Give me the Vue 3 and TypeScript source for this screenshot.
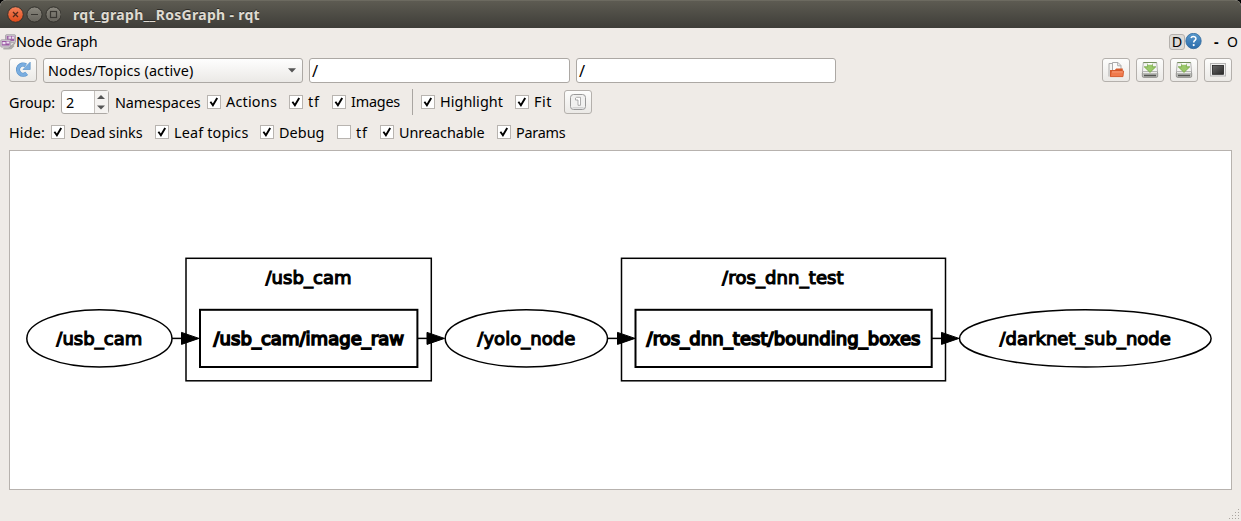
<script setup lang="ts">
import { ref } from 'vue'

interface Check { label: string; on: boolean; pitch: number; text: number }
interface Shape { x: number; w: number; label: string; textX: number; textW: number }

// Spreads a label's letters so that it fills the given width.
const vFit = {
  mounted(el: HTMLElement, binding: { value: number }) {
    const count = (el.textContent ?? '').length
    const natural = el.getBoundingClientRect().width
    el.style.letterSpacing = `${(binding.value - natural) / count}px`
  },
}

const group = ref(2)
const groupChecks = ref<Check[]>([
  { label: 'Actions', on: true, pitch: 82, text: 51 },
  { label: 'tf', on: true, pitch: 43, text: 12 },
  { label: 'Images', on: true, pitch: 80, text: 49 },
])
const viewChecks = ref<Check[]>([
  { label: 'Highlight', on: true, pitch: 94, text: 63 },
  { label: 'Fit', on: true, pitch: 49, text: 18 },
])
const hideChecks = ref<Check[]>([
  { label: 'Dead sinks', on: true, pitch: 104, text: 72.5 },
  { label: 'Leaf topics', on: true, pitch: 105, text: 74.5 },
  { label: 'Debug', on: true, pitch: 77, text: 45.5 },
  { label: 'tf', on: false, pitch: 43, text: 12 },
  { label: 'Unreachable', on: true, pitch: 117, text: 85.5 },
  { label: 'Params', on: true, pitch: 80, text: 49.5 },
])

const nodes: Shape[] = [
  { x: 16.8, w: 145.2, label: '/usb_cam', textX: 46.3, textW: 86 },
  { x: 435.2, w: 162.3, label: '/yolo_node', textX: 467.3, textW: 98 },
  { x: 949.5, w: 251.6, label: '/darknet_sub_node', textX: 989.4, textW: 171.5 },
]
const clusters: Shape[] = [
  { x: 176, w: 245.3, label: '/usb_cam', textX: 255.5, textW: 86 },
  { x: 611.5, w: 324, label: '/ros_dnn_test', textX: 712.1, textW: 121.5 },
]
const topics: Shape[] = [
  { x: 190, w: 217.4, label: '/usb_cam/image_raw', textX: 203.5, textW: 190.5 },
  { x: 625.5, w: 296.2, label: '/ros_dnn_test/bounding_boxes', textX: 636.5, textW: 274 },
]
const edges = [
  { from: 162, to: 189.5 },
  { from: 408, to: 435 },
  { from: 598, to: 625.5 },
  { from: 922, to: 949.5 },
]
</script>

<template>
  <div class="window">
    <header class="titlebar">
      <svg class="controls" width="54" height="18" viewBox="0 0 54 18">
        <defs>
          <linearGradient id="closeFill" x2="0" y2="1"><stop stop-color="#f5835c" /><stop offset="1" stop-color="#df4a19" /></linearGradient>
          <linearGradient id="grayFill" x2="0" y2="1"><stop stop-color="#8b887f" /><stop offset="1" stop-color="#65635b" /></linearGradient>
        </defs>
        <circle cx="8.5" cy="8.5" r="7.8" fill="url(#closeFill)" stroke="#34322d" />
        <circle cx="27.5" cy="8.5" r="7.6" fill="url(#grayFill)" stroke="#34322d" />
        <circle cx="46.5" cy="8.5" r="7.6" fill="url(#grayFill)" stroke="#34322d" />
        <path d="M6 6l5 5M11 6l-5 5" stroke="#52291b" stroke-width="1.3" />
        <path d="M24 8.5h7" stroke="#393732" stroke-width="1.2" />
        <rect x="43.5" y="5.5" width="6" height="6" fill="none" stroke="#393732" stroke-width="1.2" />
      </svg>
      <span v-fit="187" class="title">rqt_graph__RosGraph - rqt</span>
    </header>

    <div class="dock">
      <svg class="dockicon" width="16" height="16" viewBox="0 0 16 16">
        <path d="M4 14.5h7l3-3M9 14l6-5" stroke="#aaa8a5" stroke-width="1.6" fill="none" />
        <rect x="5.5" y=".7" width="10" height="8" rx="1" fill="#c9c3ca" stroke="#9a929c" stroke-width=".7" />
        <rect x="6.8" y="2" width="7.5" height="5" fill="#a064a8" />
        <path d="M8.5 2.5H11v2.3H8.5zM11.8 2.5H14v2.3h-2.2z" fill="#eadced" />
        <rect x=".7" y="5.8" width="10" height="7.3" rx="1" fill="#d2ccd3" stroke="#9a929c" stroke-width=".7" />
        <rect x="1.8" y="7" width="7.8" height="4.5" fill="#9a56a3" />
        <path d="M2.5 8h3v2.2h-3zM6.4 7.6h2.8v2H6.4z" fill="#ecdff0" />
        <path d="M3 14.8h6.5" stroke="#aaa" />
      </svg>
      <span v-fit="81.5" class="label">Node Graph</span>
      <div class="dockbuttons">
        <span class="dbutton">D</span>
        <svg class="help" width="17" height="17" viewBox="0 0 17 17">
          <defs><linearGradient id="helpFill" x2="0" y2="1"><stop stop-color="#5999cd" /><stop offset="1" stop-color="#2b6cab" /></linearGradient></defs>
          <circle cx="8.5" cy="8" r="7.7" fill="url(#helpFill)" stroke="#346b9d" stroke-width=".8" />
          <path d="M6 5.1C6.5 3.7 8 3.3 9.4 3.7c1.7.5 2 2.3.8 3.4-.9.8-1.5 1.1-1.5 2.4" fill="none" stroke="#fff" stroke-width="1.5" />
          <circle cx="8.7" cy="12.1" r="1.1" fill="#fff" />
        </svg>
        <b class="dash">-</b>
        <span class="undock">O</span>
      </div>
    </div>

    <div class="row toolbar">
      <button class="tool refresh">
        <svg width="18" height="18" viewBox="0 0 18 18">
          <path d="M12.6 12.4A5.1 5.1 0 1 1 11.8 4.3" fill="none" stroke="#5b93c8" stroke-width="4.2" />
          <path d="M16.2 1.2v7.3H9z" fill="#79ade0" stroke="#5b93c8" stroke-width=".7" />
          <path d="M12.6 12.4A5.1 5.1 0 1 1 11.8 4.3" fill="none" stroke="#79ade0" stroke-width="3" />
        </svg>
      </button>
      <div class="combo">
        <span v-fit="145.5">Nodes/Topics (active)</span>
        <svg width="8" height="5" viewBox="0 0 8 5"><path d="M0 .3h8L4 4.6z" fill="#555" /></svg>
      </div>
      <div class="field"><span>/</span></div>
      <div class="field second"><span>/</span></div>
      <div class="actions">
        <button class="tool">
          <svg width="18" height="18" viewBox="0 0 18 18">
            <path d="M2 15.5V2.5h4l1.5 1.5V12" fill="#f5f5f3" stroke="#aaa" />
            <path d="M5.5 9V1.5H11l3 3V9" fill="#fafaf9" stroke="#aaa" />
            <path d="M10.7 1.5v3.3H14" fill="none" stroke="#aaa" />
            <path d="M3 15.6V9h4.8l1.4-1.6h6.6v8.2z" fill="#d65a2b" />
            <path d="M3.4 15.6l.8-5.6h12.4l-.6 5.6z" fill="#f07a4c" stroke="#cf5426" stroke-width=".8" />
            <path d="M5 10.9h10.8" stroke="#fba27d" />
          </svg>
        </button>
        <button v-for="n in 2" :key="n" class="tool">
          <svg width="18" height="18" viewBox="0 0 18 18">
            <path d="M2.3 1.5h13.4l.9 9.5H1.4z" fill="#f4f4f2" stroke="#aaa" stroke-width=".9" />
            <path d="M2.4 1.6h13.2" stroke="#6f8a55" stroke-width="1" />
            <rect x="1.3" y="11" width="15.4" height="5.4" rx="1.3" fill="#b9bab6" stroke="#858583" stroke-width=".8" />
            <path d="M2 11.5h14" stroke="#ecece9" />
            <path d="M3 14.5h12" stroke="#555653" stroke-width="1.4" />
            <path d="M6.6 3.2h4.8v2.6h3.4L9 11.4 3.2 5.8h3.4z" fill="#9bc96a" stroke="#72a342" stroke-width=".8" />
            <path d="M6.8 2h4.4v1.8H6.8z" fill="#fff" />
          </svg>
        </button>
        <button class="tool">
          <svg width="18" height="18" viewBox="0 0 18 18">
            <defs><linearGradient id="screen" x2="1" y2="1"><stop stop-color="#686868" /><stop offset="1" stop-color="#292929" /></linearGradient></defs>
            <rect x="1.5" y="2.5" width="15" height="12.5" fill="#eee" stroke="#b5b5b5" />
            <rect x="3.5" y="4.5" width="11" height="8.8" fill="url(#screen)" stroke="#222" stroke-width=".8" />
          </svg>
        </button>
      </div>
    </div>

    <div class="row grouping">
      <span class="slot group"><span v-fit="46">Group:</span></span>
      <div class="spin">
        <span class="value">{{ group }}</span>
        <svg width="13" height="22" viewBox="0 0 13 22">
          <path d="M2 8l4-4 4 4zM2 14.5h8l-4 4z" fill="#555" />
        </svg>
      </div>
      <span class="slot names"><span v-fit="85.5">Namespaces</span></span>
      <label v-for="c in groupChecks" :key="c.label" class="check" :style="{ width: c.pitch + 'px' }" @click="c.on = !c.on">
        <span class="box"><svg v-if="c.on" width="12" height="12" viewBox="0 0 12 12"><path d="M2.4 5.8L4.9 9.2 9.2 1.9" fill="none" stroke="#000" stroke-width="1.9" /></svg></span>
        <span v-fit="c.text">{{ c.label }}</span>
      </label>
      <i class="divider"></i>
      <label v-for="c in viewChecks" :key="c.label" class="check" :style="{ width: c.pitch + 'px' }" @click="c.on = !c.on">
        <span class="box"><svg v-if="c.on" width="12" height="12" viewBox="0 0 12 12"><path d="M2.4 5.8L4.9 9.2 9.2 1.9" fill="none" stroke="#000" stroke-width="1.9" /></svg></span>
        <span v-fit="c.text">{{ c.label }}</span>
      </label>
      <button class="tool">
        <svg width="18" height="18" viewBox="0 0 18 18">
          <rect x="1.5" y="1.5" width="15" height="15" rx="3" fill="#f1f1f0" stroke="#999" />
          <path d="M3.5 14.8h11" stroke="#ccc" stroke-width="1.2" />
          <path d="M6.5 7V5l1-.7h4v8H9V7z" fill="#fff" stroke="#999" stroke-width=".8" />
        </svg>
      </button>
    </div>

    <div class="row hiding">
      <span class="slot hide"><span v-fit="36">Hide:</span></span>
      <label v-for="c in hideChecks" :key="c.label" class="check" :style="{ width: c.pitch + 'px' }" @click="c.on = !c.on">
        <span class="box"><svg v-if="c.on" width="12" height="12" viewBox="0 0 12 12"><path d="M2.4 5.8L4.9 9.2 9.2 1.9" fill="none" stroke="#000" stroke-width="1.9" /></svg></span>
        <span v-fit="c.text" class="low">{{ c.label }}</span>
      </label>
    </div>

    <main class="view">
      <svg class="graph" width="1221" height="338" viewBox="0 0 1221 338">
        <g v-for="c in clusters" :key="c.label">
          <rect :x="c.x" y="107.3" :width="c.w" height="122.5" class="line" />
          <text :x="c.textX" y="132.6" :textLength="c.textW" class="name">{{ c.label }}</text>
        </g>
        <g v-for="t in topics" :key="t.label">
          <rect :x="t.x" y="158.8" :width="t.w" height="57.2" class="line strong" />
          <text :x="t.textX" y="193.7" :textLength="t.textW" class="name heavy">{{ t.label }}</text>
        </g>
        <g v-for="n in nodes" :key="n.label">
          <ellipse :cx="n.x + n.w / 2" cy="187.4" :rx="n.w / 2" ry="28.6" class="line" />
          <text :x="n.textX" y="193.7" :textLength="n.textW" class="name">{{ n.label }}</text>
        </g>
        <g v-for="e in edges" :key="e.from">
          <path :d="`M${e.from} 187.4H${e.to - 17}`" class="line" />
          <path :d="`M${e.to - 18} 181.4L${e.to - 0.5} 187.4L${e.to - 18} 193.4Z`" class="arrow" />
        </g>
      </svg>
    </main>

    <footer class="status">
      <svg width="13" height="13" viewBox="0 0 13 13">
        <path d="M10 1h1v1h-1zM7 4h1v1H7zM10 4h1v1h-1zM4 7h1v1H4zM7 7h1v1H7zM10 7h1v1h-1zM1 10h1v1H1zM4 10h1v1H4zM7 10h1v1H7zM10 10h1v1h-1z" fill="#aaa5a0" />
      </svg>
    </footer>
  </div>
</template>

<style>
body { background: #000; overflow: hidden; }
</style>

<style scoped>
.window { width: 1241px; height: 521px; box-sizing: border-box; display: flex; flex-direction: column; overflow: hidden; background: #efebe7; border-radius: 6px 6px 0 0; color: #000; font: 14.4px/20px "Noto Sans", "Open Sans", sans-serif; white-space: nowrap; }
.window span { flex: none; }
.titlebar { height: 28px; flex: none; box-sizing: border-box; padding: 1px 0 0 7px; display: flex; align-items: center; background: linear-gradient(#5d5b52, #3e3d38); border-top: 1px solid #6c6a60; }
.controls { flex: none; }
.title { margin-left: 12px; color: #dfdbd2; font-weight: 700; font-size: 14px; text-shadow: 0 -1px #2c2b27; }
.dock { height: 30px; flex: none; display: flex; align-items: center; padding: 0 3px 2px 0; box-sizing: border-box; }
.dockicon { margin-bottom: 1px; }
.dockbuttons { margin-left: auto; display: flex; align-items: center; }
.dbutton { width: 16px; height: 16px; box-sizing: border-box; border: 1px solid #b5b1ad; border-radius: 3px; background: #dedbd7; line-height: 14px; text-align: center; margin-bottom: 1px; }
.help { margin: 0 12px 1px 0; }
.dash { width: 13px; }
.undock { font-size: 14px; width: 11px; }
.row { flex: none; display: flex; align-items: center; padding: 0 9px; }
.toolbar { height: 25px; }
.tool { width: 28px; height: 24px; flex: none; box-sizing: border-box; padding: 0; border: 1px solid #b4b0ac; border-radius: 3px; background: linear-gradient(#fdfdfc, #ebe9e6); display: flex; align-items: center; justify-content: center; }
.toolbar .tool { margin-bottom: 1px; }
.combo { width: 260px; height: 25px; margin-left: 6px; box-sizing: border-box; padding: 0 6px 0 4px; border: 1px solid #aca8a4; border-radius: 3px; background: linear-gradient(#fefefe, #ebe9e6); display: flex; align-items: center; justify-content: space-between; }
.field { width: 261px; height: 25px; margin-left: 6px; box-sizing: border-box; padding: 2px; border: 1px solid #aca8a4; border-radius: 3px; background: #fff; font-size: 16.5px; }
.second { width: 260px; }
.actions { margin-left: auto; display: flex; gap: 6px; }
.grouping { height: 24px; margin-top: 7px; }
.slot { display: block; }
.group { width: 52px; padding-top: 1px; }
.names { width: 92px; margin-left: 6px; padding-top: 1px; }
.spin { width: 48px; height: 24px; box-sizing: border-box; border: 1px solid #aca8a4; border-radius: 3px; background: #fff; display: flex; align-items: center; }
.value { width: 33px; padding: 1px 0 0 4px; box-sizing: border-box; border-right: 1px solid #c5c1bd; line-height: 21px; }
.spin svg { background: #f5f3f1; }
.check { flex: none; display: flex; align-items: center; gap: 5px; }
.box { width: 14px; height: 14px; box-sizing: border-box; border: 1px solid #b8b4b0; background: #fff; display: flex; }
.divider { width: 1px; height: 26px; margin-right: 8px; background: #a9a5a1; }
.hiding { height: 36px; }
.hide { width: 42px; padding-top: 1px; }
.low { padding-top: 1px; }
.view { width: 1223px; height: 340px; flex: none; margin-left: 9px; box-sizing: border-box; border: 1px solid #b7b2ae; background: #fff; }
.graph { display: block; }
.line { fill: none; stroke: #000; stroke-width: 1.5; }
.strong { stroke-width: 2; }
.arrow { fill: #000; stroke: #000; }
.name { font: 18px "DejaVu Sans", sans-serif; fill: #000; stroke: #000; stroke-width: 1.15; }
.heavy { stroke-width: 1.6; }
.status { flex: 1; display: flex; align-items: flex-end; justify-content: flex-end; }
</style>
